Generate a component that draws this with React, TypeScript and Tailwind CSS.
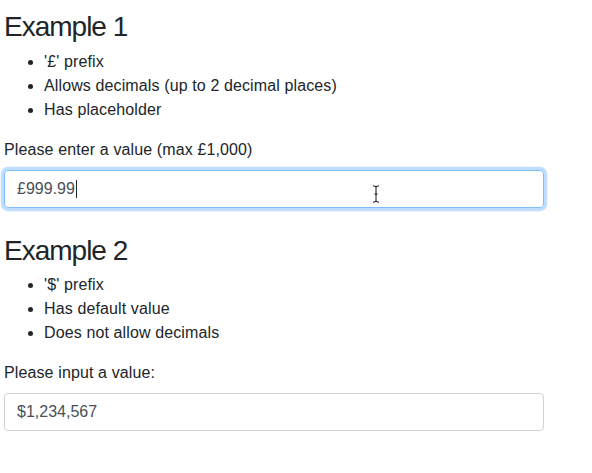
const font = { fontFamily: '"Liberation Sans", Arial, sans-serif' };

function Example({
  title,
  items,
  label,
  children,
}: {
  title: string;
  items: string[];
  label: string;
  children: React.ReactNode;
}) {
  return (
    <div className="pt-2">
      <h3 className="mb-[6px] pt-[2px] text-[28px] leading-[1.2] font-normal tracking-[-1px] text-[#212529]">
        {title}
      </h3>
      <ul className="mb-4 list-disc pl-10 tracking-[0.12px]">
        {items.map((t) => (
          <li key={t} className="leading-6">
            {t}
          </li>
        ))}
      </ul>
      <div className="mb-4">
        <label className="mb-2 block leading-6 tracking-[0.12px]">{label}</label>
        {children}
      </div>
    </div>
  );
}

export default function App() {
  return (
    <div className="min-h-[473px] w-[592px] bg-white pl-1 text-base text-[#212529]" style={font}>
      <div className="w-[540px]">
        <Example
          title="Example 1"
          items={["'£' prefix", "Allows decimals (up to 2 decimal places)", "Has placeholder"]}
          label="Please enter a value (max £1,000)"
        >
          <div className="relative flex h-[38px] items-center rounded border border-[#80bdff] px-3 text-[#495057] shadow-[0_0_0_3.2px_rgba(0,123,255,0.25)]">
            <span>£999.99</span>
            <span className="ml-px h-[18px] w-px bg-[#212529]" />
            <svg className="absolute top-[14px] left-[367px]" width="8" height="18" viewBox="0 0 8 18">
              <path d="M1 1h2l1 1 1-1h2M4 2v14M1 17h2l1-1 1 1h2M2.5 9h3" fill="none" stroke="#111" strokeWidth="1" />
            </svg>
          </div>
        </Example>
        <Example
          title="Example 2"
          items={["'$' prefix", "Has default value", "Does not allow decimals"]}
          label="Please input a value:"
        >
          <div className="flex h-[38px] items-center rounded border border-[#ced4da] px-3 text-[#495057]">
            $1,234,567
          </div>
        </Example>
      </div>
    </div>
  );
}
